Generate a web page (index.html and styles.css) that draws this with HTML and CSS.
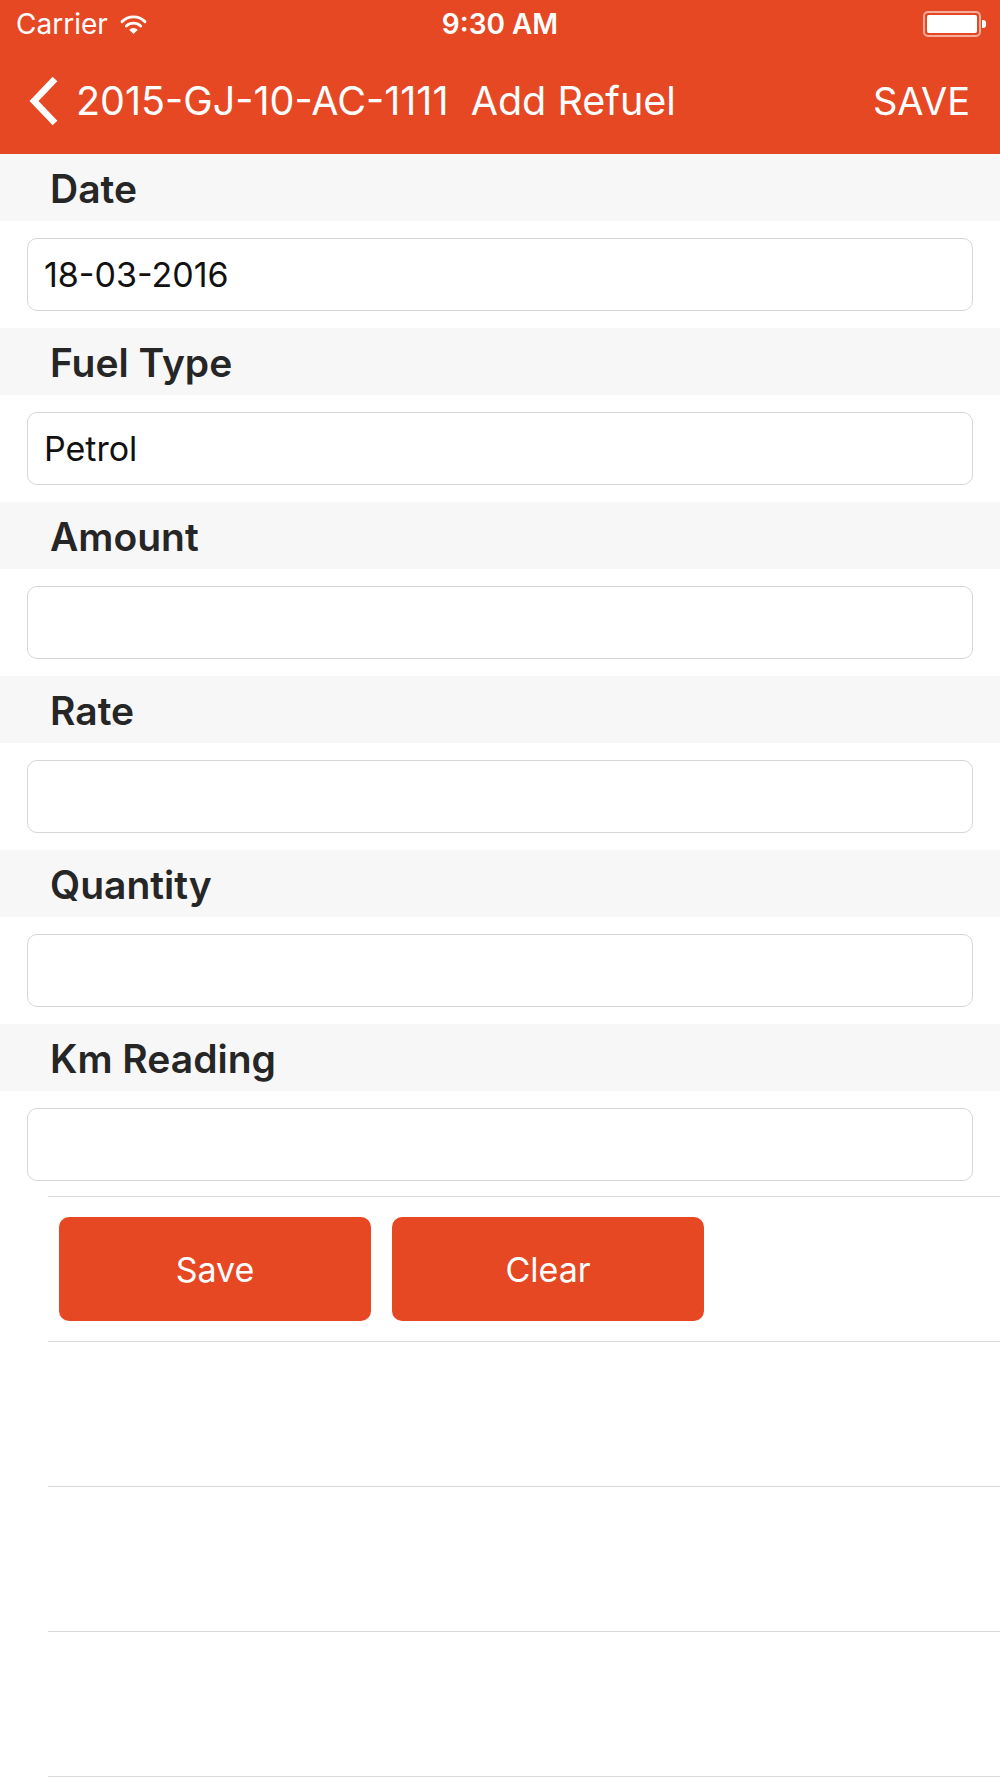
FILE: index.html
```html
<!DOCTYPE html>
<html lang="en">
<head>
  <meta charset="UTF-8">
  <title>Add Refuel</title>
  <link rel="stylesheet" href="styles.css">
</head>
<body>
  <div class="topbar">
    <div class="status">
      <div class="status-left">
        <span>Carrier</span>
        <svg class="wifi" viewBox="0 0 28 22">
          <path d="M2 8 A17 17 0 0 1 26 8" fill="none" stroke="#fff" stroke-width="3" stroke-linecap="round"/>
          <path d="M6.5 12.5 A11 11 0 0 1 21.5 12.5" fill="none" stroke="#fff" stroke-width="3" stroke-linecap="round"/>
          <path d="M14 21 L9.5 16.5 A6.5 6.5 0 0 1 18.5 16.5 Z" fill="#fff"/>
        </svg>
      </div>
      <div class="status-time">9:30 AM</div>
      <div class="status-right">
        <div class="battery"><div class="battery-fill"></div></div>
        <div class="battery-nub"></div>
      </div>
    </div>
    <div class="navbar">
      <svg class="back" viewBox="0 0 32 52">
        <path d="M27 4 L6 26 L27 48" fill="none" stroke="#fff" stroke-width="6.5"/>
      </svg>
      <div class="nav-title">2015-GJ-10-AC-1111&nbsp; Add Refuel</div>
      <div class="nav-save">SAVE</div>
    </div>
  </div>

  <div class="form">
    <div class="section">
      <div class="label">Date</div>
      <div class="field-wrap"><div class="field">18-03-2016</div></div>
    </div>
    <div class="section">
      <div class="label">Fuel Type</div>
      <div class="field-wrap"><div class="field">Petrol</div></div>
    </div>
    <div class="section">
      <div class="label">Amount</div>
      <div class="field-wrap"><div class="field"></div></div>
    </div>
    <div class="section">
      <div class="label">Rate</div>
      <div class="field-wrap"><div class="field"></div></div>
    </div>
    <div class="section">
      <div class="label">Quantity</div>
      <div class="field-wrap"><div class="field"></div></div>
    </div>
    <div class="section">
      <div class="label">Km Reading</div>
      <div class="field-wrap"><div class="field"></div></div>
    </div>
  </div>

  <div class="rows">
    <div class="row buttons">
      <button class="btn">Save</button>
      <button class="btn">Clear</button>
    </div>
    <div class="row"></div>
    <div class="row"></div>
    <div class="row"></div>
  </div>
</body>
</html>
```

FILE: styles.css
```css
html, body {
  margin: 0;
  padding: 0;
  background: #fff;
  font-family: Inter, "Noto Sans", sans-serif;
  overflow: hidden;
}
.topbar {
  background: #e74824;
  color: #fff;
  height: 154px;
}
.status {
  height: 48px;
  display: flex;
  align-items: center;
  justify-content: space-between;
  padding: 0 14px 0 16px;
  font-size: 28px;
  position: relative;
}
.status-left {
  display: flex;
  align-items: center;
  gap: 12px;
}
.wifi {
  width: 27px;
  height: 21px;
}
.status-time {
  position: absolute;
  left: 0;
  right: 0;
  text-align: center;
  font-weight: 600;
  pointer-events: none;
}
.status-right {
  display: flex;
  align-items: center;
}
.battery {
  width: 50px;
  height: 18px;
  border: 2px solid rgba(255,255,255,0.55);
  border-radius: 5px;
  padding: 2px;
  box-sizing: content-box;
}
.battery-fill {
  width: 100%;
  height: 100%;
  background: #fff;
  border-radius: 2px;
}
.battery-nub {
  width: 4px;
  height: 8px;
  background: #fff;
  border-radius: 0 3px 3px 0;
  margin-left: 1px;
}
.navbar {
  height: 106px;
  display: flex;
  align-items: center;
  padding: 0 30px 0 28px;
  font-size: 39.5px;
}
.back {
  width: 32px;
  height: 52px;
  margin-right: 16px;
}
.nav-title {
  flex: 1;
  white-space: nowrap;
}
.nav-save {
  font-size: 38px;
}
.label {
  background: #f7f7f7;
  height: 64px;
  line-height: 64px;
  padding: 3px 0 0 50px;
  font-size: 39px;
  font-weight: 600;
  color: #262626;
}
.field-wrap {
  padding: 17px 27px;
}
.section:last-child .field-wrap {
  padding-bottom: 15px;
}
.field {
  height: 71px;
  border: 1px solid #d6d6d6;
  border-radius: 10px;
  padding-left: 16px;
  font-size: 34px;
  line-height: 71px;
  color: #111;
}
.rows {
  margin-left: 48px;
}
.row {
  height: 144px;
  border-top: 1px solid #d9d9d9;
}
.row:last-child {
  border-bottom: 1px solid #d9d9d9;
}
.buttons {
  display: flex;
  align-items: center;
  gap: 21px;
  padding-left: 11px;
}
.btn {
  width: 312px;
  height: 104px;
  background: #e74824;
  color: #fff;
  border: none;
  border-radius: 10px;
  font-family: Inter, "Noto Sans", sans-serif;
  font-size: 34px;
}
```
